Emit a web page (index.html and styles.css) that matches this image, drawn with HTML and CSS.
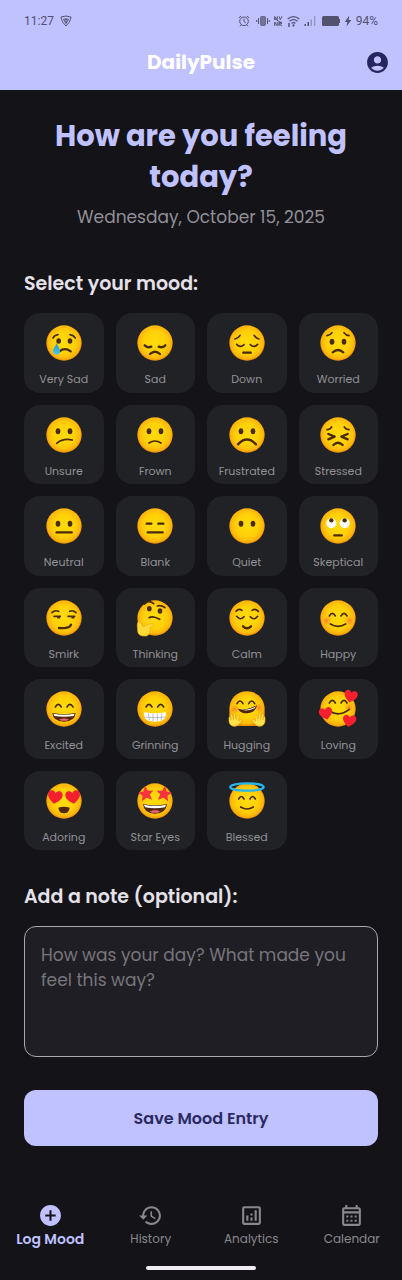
FILE: index.html
```html
<!DOCTYPE html>
<html lang="en">
<head>
<meta charset="utf-8">
<meta name="viewport" content="width=device-width, initial-scale=1">
<title>DailyPulse</title>
<link rel="stylesheet" href="styles.css">
</head>
<body>
<svg class="sprite" aria-hidden="true">
  <defs>
    <radialGradient id="skin" cx=".5" cy=".48" r=".53">
      <stop offset="0" stop-color="#ffdc0c"/><stop offset=".6" stop-color="#ffd008"/><stop offset=".86" stop-color="#fdb70a"/><stop offset="1" stop-color="#e98509"/>
    </radialGradient>
    <linearGradient id="tear" x1="0" y1="0" x2="0" y2="1"><stop offset="0" stop-color="#1795d4"/><stop offset="1" stop-color="#4fc8f2"/></linearGradient>
    <radialGradient id="blush"><stop offset="0" stop-color="#ff7038" stop-opacity=".8"/><stop offset="1" stop-color="#ff8a20" stop-opacity="0"/></radialGradient>
    <g id="face"><circle cx="60" cy="60" r="53" fill="url(#skin)"/></g>
    <g id="eyes" fill="#4a2b0c"><ellipse cx="42" cy="51" rx="7" ry="9"/><ellipse cx="78" cy="51" rx="7" ry="9"/></g>
    <g id="smile-eyes" class="ink"><path d="M34 54Q43 38 52 54M69 54Q78 38 87 54"/></g>
    <g id="low-eyes" class="ink"><path d="M29 64Q40 76 51 65M70 65Q81 76 92 64"/></g>
    <path id="heart" d="M0 18C-10 11-20 3-20-7C-20-19-5-22 0-11C5-22 20-19 20-7C20 3 10 11 0 18Z" fill="#f4202f"/>
    <path id="star" d="M0-21L6-7L21-6L10 4L14 19L0 11L-14 19L-10 4L-21-6L-6-7Z" fill="#f5333c"/>
    <g id="hand"><path d="M-7 17C-17 14-19 4-18-7C-18-12-13-12-13-7L-12-1L-14-15C-15-21-9-22-8-16L-4-3L-5-17C-5-22 1-22 1-17L3-3L6-12C8-17 13-14 12-10L10 2L16-2C20-4 22 1 18 5L8 15Q1 20-7 17Z" fill="#ffe14b" stroke="#f0a810" stroke-width="2"/></g>
  </defs>
</svg>
<div class="app">
  <header class="top">
    <div class="status">
      <div class="status-side">
        <span>11:27</span>
        <svg width="12" height="12" viewBox="0 0 12 12" fill="none" stroke="currentColor"><path d="M1 2Q6 0 11 2Q11 4 9 7.500L6 11L3 7.500Q1 4 1 2Z"/><path d="M3.500 4.200h5L6 8.500Z"/><path d="M6 3v5"/></svg>
      </div>
      <div class="status-side right">
        <svg width="12" height="12" viewBox="0 0 12 12" fill="none" stroke="currentColor"><circle cx="6" cy="6.300" r="4.300"/><path d="M6 3.800v2.700l1.700 1.300M.8 2.900L3 1M11.200 2.900L9 1M3 10l-1 1.300M9 10l1 1.300"/></svg>
        <svg width="14" height="12" viewBox="0 0 14 12" fill="none" stroke="currentColor"><rect x="4.500" y="1.500" width="5" height="9" rx="1" fill="currentColor" fill-opacity=".7" stroke-opacity=".7"/><path d="M2.500 3v6M11.500 3v6M.7 5v2M13.300 5v2"/></svg>
        <svg width="9" height="12" viewBox="0 0 9 12" fill="none" stroke="currentColor"><path d="M.7 5V1.500l2.600 3.200V1.500M5 1.300l1.300 3.400L8 1.300M.7 11V7.200l2.500 3.500V7M5 11V7.200h2.500v1.600H5l3 2.200M.5 3.500l7.500 5"/></svg>
        <svg width="13" height="12" viewBox="0 0 13 12" fill="none" stroke="currentColor" stroke-width="1.300"><path d="M.7 4Q6.500-.8 12.300 4M2.500 6.300Q6.500 3 10.500 6.300M4.500 8.300Q6.500 6.800 8.500 8.300"/><circle cx="6.500" cy="10.500" r=".5"/><path d="M1 9h2M1 11h2"/></svg>
        <svg class="signal" width="12" height="12" viewBox="0 0 12 12" fill="currentColor"><path d="M.5 9H2v2H.5zM3.500 7H5v4H3.500z"/><path opacity=".4" d="M6.500 4.500H8V11H6.500zM10 1h1.300v10H10z"/></svg>
        <svg class="battery" width="18" height="10" viewBox="0 0 18 10" fill="currentColor"><rect width="17" height="10" rx="1.500"/><path d="M17 3h1v4h-1z"/></svg>
        <svg width="8" height="12" viewBox="0 0 8 12" fill="currentColor"><path d="M5.300.5L.8 6.900h2.500L2.500 11.500L7.300 5H4.700Z"/></svg>
        <span>94%</span>
      </div>
    </div>
    <div class="appbar">
      <strong class="brand">DailyPulse</strong>
      <button class="account" type="button" aria-label="Account"><svg width="25" height="25" viewBox="0 0 24 24" fill="currentColor"><path d="M12 2C6.480 2 2 6.480 2 12s4.480 10 10 10 10-4.480 10-10S17.520 2 12 2zm0 4c1.930 0 3.500 1.570 3.500 3.500S13.930 13 12 13s-3.500-1.570-3.500-3.500S10.070 6 12 6zm0 14c-2.030 0-4.430-.82-6.140-2.880C7.550 15.800 9.680 15 12 15s4.450.8 6.140 2.120C16.430 19.180 14.030 20 12 20z"/></svg></button>
    </div>
  </header>

  <main class="content">
    <h1 class="question">How are you feeling today?</h1>
    <p class="date">Wednesday, October 15, 2025</p>

    <h2 class="section">Select your mood:</h2>
    <div class="moods">
      <button class="mood" type="button"><svg viewBox="0 0 120 120"><use href="#face"/><g fill="#4a2b0c"><ellipse cx="44" cy="54" rx="7" ry="8"/><ellipse cx="78" cy="54" rx="7" ry="8"/></g><g class="ink"><path d="M27 45Q32 36 42 35M78 35Q88 36 94 45"/><path d="M46 85Q63 72 80 85" stroke-width="7"/></g><path d="M38 61C34 70 27 77 27 85Q28 95 38 95Q48 95 48 85C48 77 41 70 38 61Z" fill="url(#tear)"/></svg><span>Very Sad</span></button>
      <button class="mood" type="button"><svg viewBox="0 0 120 120"><use href="#face"/><g class="ink thick"><path d="M29 67Q38 76 49 71M71 71Q82 76 91 67"/><path d="M45 93Q60 79 75 93"/></g></svg><span>Sad</span></button>
      <button class="mood" type="button"><svg viewBox="0 0 120 120"><use href="#face"/><use href="#low-eyes"/><g class="ink"><path d="M24 48Q34 46 39 37M81 37Q87 46 96 48"/></g><path class="ink thick" d="M49 89H71"/></svg><span>Down</span></button>
      <button class="mood" type="button"><svg viewBox="0 0 120 120"><use href="#face"/><use href="#eyes" y="5"/><path class="ink" d="M27 38Q37 37 42 29M78 29Q84 37 93 38"/><path class="ink thick" d="M44 88Q60 74 76 88"/></svg><span>Worried</span></button>

      <button class="mood" type="button"><svg viewBox="0 0 120 120"><use href="#face"/><use href="#eyes" y="-2"/><path class="ink" d="M38 85Q57 69 85 75"/></svg><span>Unsure</span></button>
      <button class="mood" type="button"><svg viewBox="0 0 120 120"><use href="#face"/><use href="#eyes" y="-2"/><path class="ink" d="M42 84Q60 72 78 84"/></svg><span>Frown</span></button>
      <button class="mood" type="button"><svg viewBox="0 0 120 120"><use href="#face"/><use href="#eyes" y="-2"/><path class="ink thick" d="M33 88Q60 59 87 88"/></svg><span>Frustrated</span></button>
      <button class="mood" type="button"><svg viewBox="0 0 120 120"><use href="#face"/><path class="ink" d="M27 44Q36 44 41 36M79 36Q84 44 93 44"/><path class="ink thick" d="M31 57L50 65L31 73M89 57L70 65L89 73M46 90Q60 77 74 90"/></svg><span>Stressed</span></button>

      <button class="mood" type="button"><svg viewBox="0 0 120 120"><use href="#face"/><use href="#eyes" y="2"/><path class="ink thick" d="M38 79H83"/></svg><span>Neutral</span></button>
      <button class="mood" type="button"><svg viewBox="0 0 120 120"><use href="#face"/><path class="ink thick" d="M35 53H49M70 53H85M38 79H83"/></svg><span>Blank</span></button>
      <button class="mood" type="button"><svg viewBox="0 0 120 120"><use href="#face"/><use href="#eyes" y="2"/></svg><span>Quiet</span></button>
      <button class="mood" type="button"><svg viewBox="0 0 120 120"><use href="#face"/><g fill="#fff"><circle cx="40" cy="52" r="15"/><circle cx="80" cy="52" r="15"/></g><g fill="#4a2b0c"><circle cx="40" cy="43" r="6.500"/><circle cx="80" cy="43" r="6.500"/></g><path class="ink thick" d="M49 88H71"/></svg><span>Skeptical</span></button>

      <button class="mood" type="button"><svg viewBox="0 0 120 120"><use href="#face"/><g class="ink"><path d="M24 44Q32 35 44 40M77 40Q87 35 96 44"/><path d="M30 55H49M72 55H92M42 59H46M85 59H89"/></g><path class="ink thick" d="M45 90Q77 93 81 80"/></svg><span>Smirk</span></button>
      <button class="mood" type="button"><svg viewBox="0 0 120 120"><use href="#face"/><g fill="#4a2b0c"><ellipse cx="43" cy="32" rx="7" ry="8"/><ellipse cx="75" cy="39" rx="7" ry="8"/></g><g class="ink"><path d="M29 18Q41 4 56 17M67 24Q78 20 90 29"/><path d="M42 59Q54 52 74 64"/></g><path d="M12 70C5 72 7 86 8 99Q9 112 24 114H34Q45 111 45 99Q50 94 44 90Q59 83 57 78Q54 74 42 79L24 86Q19 71 12 70Z" fill="#ffdb37" stroke="#f0a810" stroke-width="2"/></svg><span>Thinking</span></button>
      <button class="mood" type="button"><svg viewBox="0 0 120 120"><use href="#face"/><g class="ink"><path d="M27 40Q35 30 45 37M75 37Q85 30 94 40"/><path d="M29 55Q40 69 51 56M70 56Q81 69 92 55"/></g><path class="ink thick" d="M48 85Q60 97 72 85"/></svg><span>Calm</span></button>
      <button class="mood" type="button"><svg viewBox="0 0 120 120"><use href="#face"/><circle cx="26" cy="68" r="15" fill="url(#blush)"/><circle cx="94" cy="68" r="15" fill="url(#blush)"/><use href="#smile-eyes"/><path class="ink" d="M37 78Q60 92 83 78"/></svg><span>Happy</span></button>

      <button class="mood" type="button"><svg viewBox="0 0 120 120"><use href="#face"/><use href="#smile-eyes"/><path d="M25 72Q60 79 95 72Q92 98 60 98Q28 98 25 72Z" fill="#51280f"/><path d="M28 74Q60 80 92 74L89 81Q60 86 31 81Z" fill="#fff"/><path d="M45 92Q60 85 75 92Q60 99 45 92Z" fill="#f36479"/></svg><span>Excited</span></button>
      <button class="mood" type="button"><svg viewBox="0 0 120 120"><use href="#face"/><use href="#smile-eyes" x="-1"/><path d="M28 70Q60 76 92 70Q98 98 60 98Q22 98 28 70Z" fill="#fff"/><path d="M28 84Q60 88 93 84M40 73L43 94M54 74V97M67 74V97M81 73L78 94" fill="none" stroke="#9c9fac" stroke-width="2"/></svg><span>Grinning</span></button>
      <button class="mood" type="button"><svg viewBox="0 0 120 120"><path d="M7 60C7 30 29 7 60 7S113 30 113 60V96Q112 111 96 111H24Q8 111 7 96Z" fill="url(#skin)"/><circle cx="24" cy="61" r="14" fill="url(#blush)"/><circle cx="95" cy="56" r="14" fill="url(#blush)"/><use href="#smile-eyes" x="-4" y="-10"/><path d="M32 59Q62 66 90 48Q87 70 61 73Q41 74 32 59Z" fill="#51280f"/><path d="M37 61Q66 66 87 52L83 58Q63 69 37 61Z" fill="#fff"/><use href="#hand" x="24" y="94"/><g transform="translate(96 94) scale(-1 1)"><use href="#hand"/></g></svg><span>Hugging</span></button>
      <button class="mood" type="button"><svg viewBox="0 0 120 120"><use href="#face"/><circle cx="93" cy="55" r="14" fill="url(#blush)"/><use href="#smile-eyes" y="-12"/><path class="ink" d="M35 66Q63 85 94 61"/><g transform="translate(98 22) rotate(14)"><use href="#heart"/></g><g transform="translate(24 74) rotate(-14)"><use href="#heart"/></g><g transform="translate(94 96) rotate(8)"><use href="#heart"/></g></svg><span>Loving</span></button>

      <button class="mood" type="button"><svg viewBox="0 0 120 120"><use href="#face"/><g transform="translate(33 49) rotate(8) scale(1.100)"><use href="#heart"/></g><g transform="translate(87 49) rotate(-8) scale(1.100)"><use href="#heart"/></g><path d="M43 80Q60 74 77 80Q75 97 60 97Q45 97 43 80Z" fill="#51280f"/></svg><span>Adoring</span></button>
      <button class="mood" type="button"><svg viewBox="0 0 120 120"><use href="#face"/><g transform="translate(33 38) rotate(-8) scale(1.100)"><use href="#star"/></g><g transform="translate(87 38) rotate(8) scale(1.100)"><use href="#star"/></g><path d="M24 69Q60 77 96 69Q93 98 60 98Q27 98 24 69Z" fill="#51280f"/><path d="M27 71Q60 78 93 71L90 79Q60 85 30 79Z" fill="#fff"/><path d="M44 92Q60 84 76 92Q60 99 44 92Z" fill="#f36479"/></svg><span>Star Eyes</span></button>
      <button class="mood" type="button"><svg viewBox="0 0 120 120"><use href="#face"/><ellipse cx="60" cy="18" rx="50" ry="11" fill="none" stroke="#28b5e9" stroke-width="7"/><g class="ink"><path d="M35 54Q43 39 51 54M69 54Q77 39 85 54"/><path d="M41 78Q60 90 79 78"/></g></svg><span>Blessed</span></button>
    </div>

    <label class="section" for="note">Add a note (optional):</label>
    <textarea class="note" id="note" rows="4" placeholder="How was your day? What made you feel this way?"></textarea>
    <button class="save" type="button">Save Mood Entry</button>
  </main>

  <nav class="tabs" aria-label="Main">
    <a class="tab active" href="#log" aria-current="page"><svg viewBox="0 0 24 24"><path d="M12 2C6.480 2 2 6.480 2 12s4.480 10 10 10 10-4.480 10-10S17.520 2 12 2zm5 11h-4v4h-2v-4H7v-2h4V7h2v4h4v2z"/></svg>Log Mood</a>
    <a class="tab" href="#history"><svg viewBox="0 0 24 24"><path d="M13 3c-4.970 0-9 4.030-9 9H1l3.890 3.890.07.14L9 12H6c0-3.870 3.130-7 7-7s7 3.130 7 7-3.130 7-7 7c-1.930 0-3.680-.79-4.940-2.060l-1.420 1.420C8.270 19.990 10.510 21 13 21c4.970 0 9-4.030 9-9s-4.030-9-9-9zm-1 5v5l4.280 2.540.72-1.210-3.500-2.080V8H12z"/></svg>History</a>
    <a class="tab" href="#analytics"><svg viewBox="0 0 24 24"><path d="M19 3H5c-1.100 0-2 .9-2 2v14c0 1.100.9 2 2 2h14c1.100 0 2-.9 2-2V5c0-1.100-.9-2-2-2zm0 16H5V5h14v14zM7 12h2v5H7zm8-5h2v10h-2zm-4 7h2v3h-2zm0-4h2v2h-2z"/></svg>Analytics</a>
    <a class="tab" href="#calendar"><svg viewBox="0 0 24 24"><path d="M19 4h-1V2h-2v2H8V2H6v2H5c-1.110 0-1.990.9-1.990 2L3 20c0 1.100.89 2 2 2h14c1.100 0 2-.9 2-2V6c0-1.100-.9-2-2-2zm0 16H5V10h14v10zm0-12H5V6h14v2zM9 14H7v-2h2v2zm4 0h-2v-2h2v2zm4 0h-2v-2h2v2zm-8 4H7v-2h2v2zm4 0h-2v-2h2v2zm4 0h-2v-2h2v2z"/></svg>Calendar</a>
  </nav>
  <div class="home-bar"></div>
</div>
</body>
</html>
```
FILE: styles.css
```css
* {
  box-sizing: border-box;
}

body {
  margin: 0;
  background: #141318;
  color: #e5e1e9;
  font-family: Poppins, Inter, "Open Sans", sans-serif;
}

button {
  border: 0;
  padding: 0;
  font: inherit;
  cursor: pointer;
}

svg {
  display: block;
  flex: none;
}

.sprite {
  position: absolute;
  width: 0;
  height: 0;
}

.ink {
  fill: none;
  stroke: #4a2b0c;
  stroke-width: 5;
  stroke-linecap: round;
  stroke-linejoin: round;
}

.thick {
  stroke-width: 7;
}

.app {
  display: flex;
  flex-direction: column;
  min-height: 100vh;
}

.top {
  background: #c0c1ff;
}

.status {
  display: flex;
  justify-content: space-between;
  padding: 13px 24px 5px;
  color: #52526f;
  font: 12px/16px Roboto, sans-serif;
}

.status-side {
  display: flex;
  align-items: center;
  gap: 6px;
}

.right {
  gap: 4px;
}

.right svg:first-child,
.signal {
  margin-right: 2px;
}

.appbar {
  display: grid;
  grid-template-columns: 1fr auto 1fr;
  align-items: center;
  min-height: 56px;
  padding: 0 12px;
}

.brand {
  grid-column: 2;
  color: #fff;
  font-size: 20px;
  line-height: 28px;
}

.account {
  justify-self: end;
  background: none;
  color: #25255f;
}

.content {
  display: flex;
  flex: 1;
  flex-direction: column;
  padding: 26px 24px 32px;
}

.question {
  margin: 0;
  color: #c0c1ff;
  font-size: 29px;
  font-weight: 700;
  line-height: 41px;
  text-align: center;
}

.date {
  margin: 7px 0 41px;
  color: #929097;
  font-size: 17px;
  line-height: 24px;
  text-align: center;
}

.section {
  margin: 0 0 15px;
  font-size: 19px;
  font-weight: 600;
  line-height: 28px;
}

.moods {
  display: grid;
  grid-template-columns: repeat(4, minmax(0, 1fr));
  gap: 12px;
  margin-bottom: 33px;
}

.mood {
  display: flex;
  flex-direction: column;
  align-items: center;
  gap: 8px;
  aspect-ratio: 1;
  padding-top: 10px;
  border-radius: 16px;
  background: #212226;
  color: #929195;
  font-size: 11px;
  line-height: 16px;
}

.mood svg {
  width: 40px;
  height: 40px;
  overflow: visible;
}

.note {
  display: block;
  width: 100%;
  margin: 0 0 33px;
  padding: 16px 16px 13px;
  border: 1px solid #aaa8b0;
  border-radius: 12px;
  background: #1f1e24;
  color: #e5e1e9;
  font: inherit;
  font-size: 17px;
  line-height: 25px;
  resize: none;
}

.note::placeholder {
  color: #77767c;
  opacity: 1;
}

.save {
  min-height: 56px;
  border-radius: 12px;
  background: #c0c1ff;
  color: #2a2a60;
  font-size: 16px;
  font-weight: 600;
}

.tabs {
  display: grid;
  grid-template-columns: repeat(4, 1fr);
}

.tab {
  display: flex;
  flex-direction: column;
  align-items: center;
  color: #89888d;
  font-size: 12px;
  line-height: 22px;
  text-decoration: none;
}

.tab svg {
  width: 25px;
  height: 25px;
  fill: currentColor;
}

.active {
  color: #c0c1ff;
  font-size: 14px;
  font-weight: 600;
}

.home-bar {
  width: 110px;
  height: 4px;
  margin: 16px auto 10px;
  border-radius: 2px;
  background: #f0ecf4;
}
```
